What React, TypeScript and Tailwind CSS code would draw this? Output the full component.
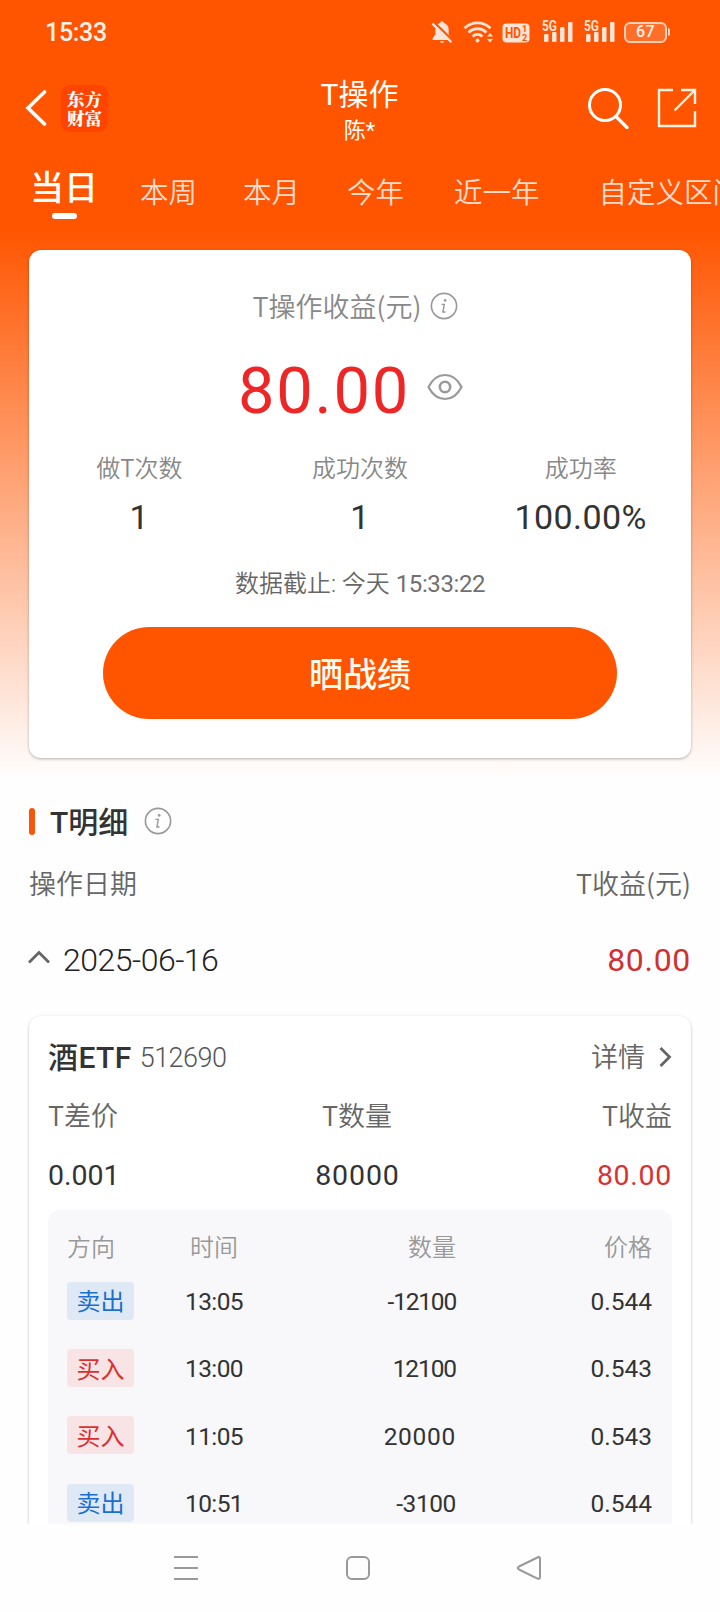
const periods = [
  { label: "本周", className: "ml-[42px]" },
  { label: "本月", className: "ml-[46px]" },
  { label: "今年", className: "ml-[47px]" },
  { label: "近一年", className: "ml-[50px]" },
  { label: "自定义区间", className: "ml-[59px]" },
];

const stats = [
  { label: "做T次数", value: "1" },
  { label: "成功次数", value: "1" },
  { label: "成功率", value: "100.00%" },
];

const trades = [
  { side: "sell", time: "13:05", amount: "-12100", price: "0.544", spacing: "tracking-[-1.2px]" },
  { side: "buy", time: "13:00", amount: "12100", price: "0.543", spacing: "tracking-[-1.1px]" },
  { side: "buy", time: "11:05", amount: "20000", price: "0.543", spacing: "tracking-[0.7px]" },
  { side: "sell", time: "10:51", amount: "-3100", price: "0.544", spacing: "tracking-[-0.4px]" },
];

const InfoIcon = () => (
  <svg width="28" height="28" viewBox="0 0 28 28" fill="none" className="shrink-0">
    <circle cx="14" cy="14" r="12.6" stroke="#999" strokeWidth="1.6" />
    <circle cx="15.2" cy="8.4" r="1.3" fill="#999" />
    <path d="M11.5 12.4h2.8l-1.4 7.6h2.6" stroke="#999" strokeWidth="1.4" />
  </svg>
);

const Signal = () => (
  <svg width="32" height="24" viewBox="0 0 32 24" fill="#ffe3d6" className="shrink-0">
    <text
      x="0"
      y="11"
      fontSize="14"
      fontWeight="700"
      textLength="15"
      lengthAdjust="spacingAndGlyphs"
      fontFamily="Roboto, sans-serif"
    >
      5G
    </text>
    <rect x="2" y="14" width="4.5" height="8" rx="1" />
    <rect x="10" y="12" width="4.5" height="10" rx="1" />
    <rect x="18" y="7" width="4.5" height="15" rx="1" />
    <rect x="26" y="2" width="4.5" height="20" rx="1" />
  </svg>
);

const StatusBar = () => (
  <div className="flex h-16 items-center pl-[45px] pr-[50px]">
    <span className="pt-[2px] text-[25px] font-medium tracking-[-0.3px] text-[#fff2ea]">15:33</span>
    <svg width="22" height="24" viewBox="0 0 22 24" className="ml-auto" fill="#ffe3d6">
      <path d="M11 1.2c.9 0 1.6.7 1.6 1.6 3 .8 5 3.4 5 6.6v5.2l2.8 3.6v1.8H1.6v-1.8l2.8-3.6V9.4c0-3.2 2-5.8 5-6.6 0-.9.7-1.6 1.6-1.6z" />
      <path d="M8.8 21.3h4.4c-.4 1-1.2 1.6-2.2 1.6s-1.8-.6-2.2-1.6z" />
      <path d="M3.4 2.6l19 18.6" stroke="#ff5500" strokeWidth="2.2" />
      <path d="M1.4 3.6l19 18.6" stroke="#ffe3d6" strokeWidth="2.2" />
    </svg>
    <svg width="31" height="24" viewBox="0 0 31 24" className="ml-[10px]" fill="none" stroke="#ffe3d6">
      <path d="M1.5 8.3c7.5-7.2 18.5-7.2 26 0" strokeWidth="2.8" />
      <path d="M5.5 12.5c5.3-5 12.7-5 18 0" strokeWidth="2.8" />
      <path d="M9.5 16.5c3-2.8 7-2.8 10 0" strokeWidth="2.8" />
      <circle cx="14.5" cy="20.5" r="2" fill="#ffe3d6" stroke="none" />
      <path d="M24 16.5l3-3.5 3 3.5zM24 19l3 3.5 3-3.5z" fill="#ffe3d6" stroke="none" />
    </svg>
    <svg width="28" height="20" viewBox="0 0 28 20" className="ml-[8px] mt-px" fontFamily="Roboto, sans-serif" fontWeight="700">
      <rect x="0.5" y="0.5" width="27" height="19" rx="4" fill="#ffe3d6" />
      <text x="3" y="15" fontSize="14" textLength="16" lengthAdjust="spacingAndGlyphs" fill="#ff5500">
        HD
      </text>
      <text x="20" y="9" fontSize="9" fill="#ff5500">
        1
      </text>
      <text x="20" y="18" fontSize="9" fill="#ff5500">
        2
      </text>
    </svg>
    <div className="ml-[12px] flex gap-[10px]">
      <Signal />
      <Signal />
    </div>
    <div className="ml-[8px] flex h-[21px] w-[43px] items-center justify-center rounded-[6px] border-2 border-[#ffd0b8] bg-[#ff6f2a] text-[16px] font-medium leading-none tracking-[0.5px] text-[#fff2ea]">
      67
    </div>
    <div className="ml-px h-[8px] w-[2px] rounded-r bg-[#ffd0b8]" />
  </div>
);

const NavBar = () => (
  <div className="flex h-[84px] items-center pb-[8px] pt-[12px]">
    <svg width="22" height="38" viewBox="0 0 22 38" className="ml-[25px]" fill="none">
      <path d="M19.5 3L3 19l16.5 16" stroke="#fff" strokeWidth="3.6" strokeLinecap="round" />
    </svg>
    <div className="ml-[14px] flex h-[47px] w-[47px] flex-col items-center justify-center rounded-[9px] bg-[#ff4400] font-['Noto_Serif_CJK_SC','Noto_Sans_CJK_SC',serif] text-[17.5px] font-black leading-[19px] text-white">
      <span>东方</span>
      <span>财富</span>
    </div>
    <div className="flex flex-1 flex-col items-center pl-[24px] pt-[7px] text-white">
      <h1 className="text-[30px] leading-[38px]">T操作</h1>
      <p className="mt-px text-[22px] leading-[32px]">陈*</p>
    </div>
    <svg width="42" height="42" viewBox="0 0 42 42" fill="none" className="mr-[28px]">
      <circle cx="18" cy="18" r="15.5" stroke="#fff" strokeWidth="3" />
      <path d="M29 29.5L40 40.5" stroke="#fff" strokeWidth="3.2" strokeLinecap="round" />
    </svg>
    <svg width="40" height="40" viewBox="0 0 40 40" fill="none" className="mr-[23px]" stroke="#fff3e6" strokeWidth="2.4">
      <path d="M16 2H2v36h36V23M24 2h14v14M38 2L17.5 22.5" />
    </svg>
  </div>
);

const PeriodTabs = () => (
  <div className="flex h-[84px] items-center overflow-hidden whitespace-nowrap pl-[30px]">
    <div className="flex flex-col items-center pt-[3px] text-white">
      <span className="text-[34px] font-medium leading-[46px]">当日</span>
      <span className="mt-[2px] h-[6px] w-[25px] rounded-full bg-white" />
    </div>
    {periods.map((period) => (
      <span
        key={period.label}
        className={`${period.className} pt-[7px] text-[28.5px] font-[350] leading-[40px] text-[#ffdccc]`}
      >
        {period.label}
      </span>
    ))}
  </div>
);

const SummaryCard = () => (
  <section className="mx-[29px] mt-[18px] flex h-[508px] flex-col items-center rounded-xl bg-white shadow-[0_1px_3px_rgba(0,0,0,0.3)]">
    <div className="mt-[35px] flex h-[42px] items-center gap-[9px] pr-[9px] text-[27px] text-[#888]">
      <span className="font-['Noto_Sans_CJK_SC',sans-serif] font-[350]">T操作收益(元)</span>
      <InfoIcon />
    </div>
    <div className="mt-[23px] flex h-[80px] items-center gap-[17px] pr-[19px]">
      <span className="pt-[2px] text-[65px] leading-none tracking-[1.7px] text-[#ee2626]">80.00</span>
      <svg width="36" height="28" viewBox="0 0 36 28" fill="none" stroke="#999" strokeWidth="2.2" className="-mt-[6px]">
        <path d="M1.5 14C5.5 6 11 2 18 2s12.5 4 16.5 12C30.5 22 25 26 18 26S5.500 22 1.500 14z" />
        <circle cx="18" cy="14" r="5.2" strokeWidth="2.6" />
      </svg>
    </div>
    <div className="mt-[17px] grid w-full grid-cols-3">
      {stats.map((stat) => (
        <div key={stat.label} className="flex flex-col items-center">
          <span className="font-['Noto_Sans_CJK_SC',sans-serif] text-[24px] font-[350] leading-[40px] text-[#888]">
            {stat.label}
          </span>
          <span className="mt-[7px] text-[34px] leading-[46px] tracking-[0.4px] text-[#333]">
            {stat.value}
          </span>
        </div>
      ))}
    </div>
    <p className="mt-[26px] text-[24px] leading-[36px] text-[#666]">
      <span className="font-[350]">数据截止: 今天</span>{" "}
      <span className="tracking-[-0.4px] text-[#707070]">15:33:22</span>
    </p>
    <button className="mt-[25px] h-[92px] w-[514px] rounded-full bg-[#ff5500] pt-[5px] text-[34px] font-medium text-[#fffaf2]">
      晒战绩
    </button>
  </section>
);

const SideBadge = ({ side }: { side: string }) => (
  <span
    className={
      side === "sell"
        ? "flex h-[38px] w-[67px] items-center justify-center rounded bg-[#dfe9f6] pt-[3px] text-[24px] text-[#1a6fd0]"
        : "flex h-[38px] w-[67px] items-center justify-center rounded bg-[#f8e4e5] pt-[3px] text-[24px] text-[#dc3030]"
    }
  >
    {side === "sell" ? "卖出" : "买入"}
  </span>
);

const StockCard = () => (
  <section className="mx-[29px] mt-[34px] h-[508px] rounded-t-xl bg-white px-[19px] pt-[20px] shadow-[0_1px_3px_rgba(0,0,0,0.25)]">
    <div className="flex h-[42px] items-center">
      <span className="text-[30px] font-medium tracking-[0.4px] text-[#333]">酒ETF</span>
      <span className="ml-[8px] pt-[2px] text-[27px] font-light tracking-[-0.5px] text-[#555]">512690</span>
      <span className="ml-auto pt-[3px] text-[27px] font-[350] text-[#666]">详情</span>
      <svg width="16" height="22" viewBox="0 0 16 22" fill="none" className="-mr-px ml-[12px]">
        <path d="M3.5 2l9 9-9 9" stroke="#666" strokeWidth="2.8" />
      </svg>
    </div>
    <div className="mt-[16px] grid h-[42px] grid-cols-3 items-center font-['Noto_Sans_CJK_SC',sans-serif] text-[27px] font-[350] text-[#666]">
      <span>T差价</span>
      <span className="pr-[6px] text-center">T数量</span>
      <span className="text-right">T收益</span>
    </div>
    <div className="mt-[19px] grid h-[42px] grid-cols-3 items-center text-[28.5px] text-[#333]">
      <span>0.001</span>
      <span className="pr-[5px] text-center tracking-[0.9px]">80000</span>
      <span className="text-right tracking-[0.7px] text-[#dc3030]">80.00</span>
    </div>
    <div className="mt-[13px] h-[314px] overflow-hidden rounded-t-xl bg-[#f8f8fa] px-[19px] pt-[18px]">
      <div className="grid h-[38px] grid-cols-[94px_106px_189px_196px] items-center pt-[2px] text-[24px] font-[350] text-[#999]">
        <span>方向</span>
        <span className="text-center">时间</span>
        <span className="text-right">数量</span>
        <span className="text-right">价格</span>
      </div>
      {trades.map((trade) => (
        <div
          key={trade.time}
          className="mb-[29.3px] mt-[15px] grid h-[38px] grid-cols-[94px_106px_189px_196px] items-center text-[24.5px] text-[#333] [&+&]:mt-0"
        >
          <SideBadge side={trade.side} />
          <span className="pt-[3px] text-center tracking-[-0.6px]">{trade.time}</span>
          <span className={`pt-[3px] text-right ${trade.spacing}`}>{trade.amount}</span>
          <span className="pt-[3px] text-right">{trade.price}</span>
        </div>
      ))}
    </div>
  </section>
);

const Details = () => (
  <section>
    <div className="mt-[42px] flex h-[42px] items-center px-[29px]">
      <span className="h-[27px] w-[6px] rounded-sm bg-[#f6560a]" />
      <h2 className="ml-[15px] pt-[3px] text-[30px] font-medium text-[#333]">T明细</h2>
      <span className="ml-[16px]">
        <InfoIcon />
      </span>
    </div>
    <div className="mt-[20px] flex h-[42px] items-center justify-between px-[29px] font-['Noto_Sans_CJK_SC',sans-serif] text-[27px] font-[350] text-[#666]">
      <span>操作日期</span>
      <span>T收益(元)</span>
    </div>
    <div className="mt-[34px] flex h-[44px] items-center px-[29px] text-[32px] font-light text-[#333]">
      <svg width="22" height="16" viewBox="0 0 22 16" fill="none" className="-ml-px -mt-[6px]">
        <path d="M1 13.5L11 3.5l10 10" stroke="#666" strokeWidth="2.8" />
      </svg>
      <span className="ml-[13px] tracking-[-0.5px] text-[#222]">2025-06-16</span>
      <span className="ml-auto font-normal tracking-[0.7px] text-[#d03030]">80.00</span>
    </div>
    <StockCard />
  </section>
);

const SystemNav = () => (
  <div className="relative flex h-[88px] items-center bg-[#fefefe] pl-[172px]">
    <svg width="28" height="28" viewBox="0 0 28 28" stroke="#999" strokeWidth="2" fill="none">
      <path d="M2 3h24M2 14h24M2 25h24" />
    </svg>
    <svg width="28" height="28" viewBox="0 0 28 28" stroke="#999" strokeWidth="2" fill="none" className="ml-[144px]">
      <rect x="3" y="3" width="22" height="22" rx="5" />
    </svg>
    <svg width="28" height="28" viewBox="0 0 28 28" stroke="#999" strokeWidth="2" fill="none" className="ml-[143px]">
      <path d="M23.5 3Q25 2.5 25 5v18q0 2.500-2.500 1.600L4 15.500q-2.500-1.500 0-3z" strokeLinejoin="round" />
    </svg>
  </div>
);

export default function App() {
  return (
    <div className="h-[1612px] w-[720px] overflow-hidden bg-[#fefefe] bg-[linear-gradient(to_bottom,#ff5500_0px,#ff5500_228px,#fefefe_778px)] font-[Roboto,'Noto_Sans_CJK_SC',sans-serif]">
      <StatusBar />
      <NavBar />
      <PeriodTabs />
      <SummaryCard />
      <Details />
      <SystemNav />
    </div>
  );
}
